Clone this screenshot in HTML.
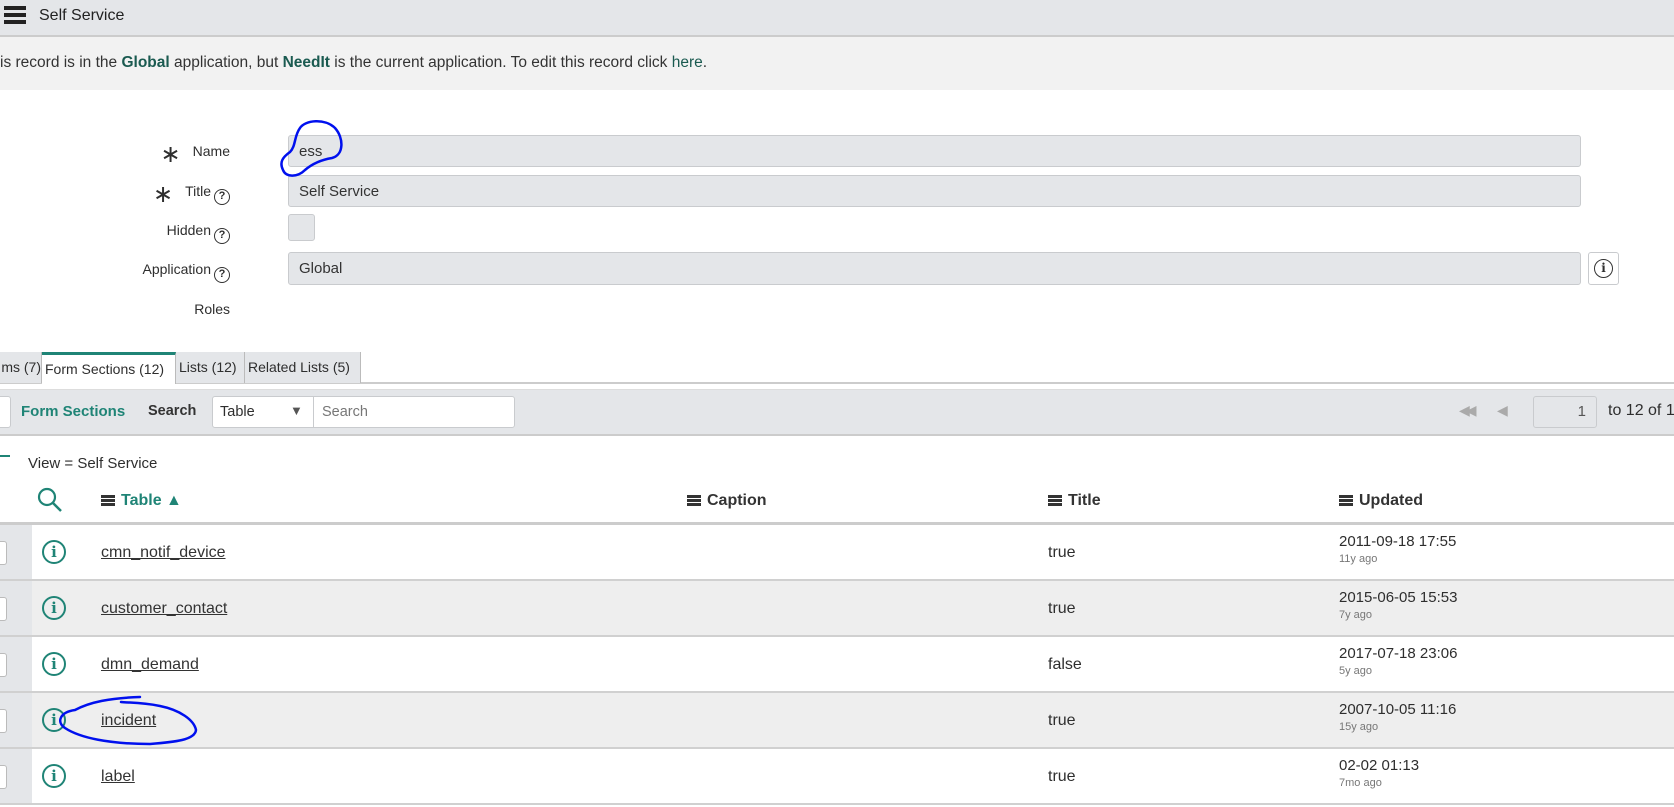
<!DOCTYPE html>
<html><head><meta charset="utf-8"><style>
*{box-sizing:border-box;margin:0;padding:0}
body{width:1674px;height:807px;overflow:hidden;background:#fff;font-family:"Liberation Sans",sans-serif;color:#2e2e2e;position:relative;font-size:15px}
.a{position:absolute;white-space:nowrap}
.field{position:absolute;background:#e4e6e9;border:1px solid #c9cbce;border-radius:3px;font-size:15px;color:#333;padding:0 0 0 10px;line-height:31px}
.lbl{position:absolute;right:1444px;font-size:14px;text-align:right;white-space:nowrap;line-height:20px}
.q{display:inline-block;width:16px;height:16px;border:1.5px solid #333;border-radius:50%;font-size:11px;line-height:13px;text-align:center;font-weight:bold;vertical-align:-3px;margin-left:3px}
.star{font-size:24px;line-height:0;vertical-align:-6px;margin-right:12px}
.tab{position:absolute;top:352px;height:31px;background:#e4e6e9;border-right:1px solid #bbb;font-size:14px;line-height:30px;padding:0 3px;white-space:nowrap;overflow:hidden}
.ham{display:inline-block;width:14px;height:11px;border-top:3px solid #333;border-bottom:3px solid #333;position:relative;vertical-align:-1px;margin-right:6px}
.ham:after{content:"";position:absolute;left:0;right:0;top:1px;height:3px;background:#333}
.row{position:absolute;left:0;width:1674px;height:56px;border-bottom:2px solid #d0d0d0}
.row .chk{position:absolute;left:0;top:0;width:32px;height:54px;background:#e4e6e9}
.row .chk i{position:absolute;left:-10px;top:16px;width:17px;height:24px;background:#fff;border:1px solid #bbb;border-radius:3px}
.row .inf{position:absolute;left:42px;top:15px;width:24px;height:24px;border:2px solid #1f8476;border-radius:50%;color:#1f8476;font-size:15px;font-weight:bold;text-align:center;line-height:20px;font-family:"DejaVu Serif",serif}
.row .t{position:absolute;left:101px;top:19px;text-decoration:underline;font-size:16px;color:#333}
.row .b{position:absolute;left:1048px;top:19px;font-size:16px}
.row .d{position:absolute;left:1339px;top:8px;font-size:15px}
.row .g{position:absolute;left:1339px;top:28px;font-size:11px;color:#777}
</style></head><body>
<div class="a" style="left:0;top:0;width:1674px;height:37px;background:#e4e6e9;border-bottom:2px solid #ccc"></div>
<div class="a" style="left:4px;top:6px;width:22px;height:18px;border-top:4px solid #222;border-bottom:4px solid #222"><div style="margin-top:3px;height:4px;background:#222"></div></div>
<div class="a" style="left:39px;top:7px;font-size:16px;color:#222">Self Service</div>
<div class="a" style="left:0;top:37px;width:1674px;height:53px;background:#f2f2f2"></div>
<div class="a" style="left:0;top:54px;font-size:15.5px;color:#333">is record is in the <b style="color:#1a5a50">Global</b> application, but <b style="color:#1a5a50">NeedIt</b> is the current application. To edit this record click <span style="color:#1a5a50">here</span>.</div>

<div class="lbl" style="top:141px"><span class="star">∗</span>Name</div>
<div class="lbl" style="top:181px"><span class="star">∗</span>Title<span class="q">?</span></div>
<div class="lbl" style="top:220px">Hidden<span class="q">?</span></div>
<div class="lbl" style="top:259px">Application<span class="q">?</span></div>
<div class="lbl" style="top:299px">Roles</div>
<div class="field" style="left:288px;top:135px;width:1293px;height:32px">ess</div>
<div class="field" style="left:288px;top:175px;width:1293px;height:32px">Self Service</div>
<div class="field" style="left:288px;top:214px;width:27px;height:27px"></div>
<div class="field" style="left:288px;top:252px;width:1293px;height:33px">Global</div>
<div class="a" style="left:1588px;top:252px;width:31px;height:33px;border:1px solid #c9cbce;border-radius:3px;background:#fff"><div style="margin:6px auto;width:19px;height:19px;border:1.5px solid #333;border-radius:50%;text-align:center;font-size:12px;line-height:16px;font-weight:bold;font-family:'DejaVu Serif',serif">i</div></div>

<div class="a" style="left:0;top:382px;width:1674px;height:2px;background:#ccc"></div>
<div class="tab" style="left:0;width:42px;padding:0;text-align:right">ms (7)</div>
<div class="tab" style="left:42px;width:134px;background:#fff;border-top:3px solid #1f8476;height:32px;line-height:28px">Form Sections (12)</div>
<div class="tab" style="left:176px;width:69px">Lists (12)</div>
<div class="tab" style="left:245px;width:116px">Related Lists (5)</div>

<div class="a" style="left:0;top:389px;width:1674px;height:47px;background:#e4e6e9;border-bottom:2px solid #ccc;border-top:1px solid #ddd"></div>
<div class="a" style="left:-20px;top:396px;width:31px;height:32px;background:#fff;border:1px solid #c9cbce;border-radius:3px"></div>
<div class="a" style="left:21px;top:403px;font-size:15px;font-weight:bold;color:#1f8476">Form Sections</div>
<div class="a" style="left:148px;top:403px;font-size:14.5px;font-weight:bold;color:#333">Search</div>
<div class="a" style="left:212px;top:396px;width:303px;height:32px;background:#fff;border:1px solid #c9cbce;border-radius:3px"></div>
<div class="a" style="left:313px;top:396px;width:1px;height:32px;background:#c9cbce"></div>
<div class="a" style="left:220px;top:404px;font-size:14.5px">Table</div>
<div class="a" style="left:290px;top:403px;font-size:13px;color:#555">▼</div>
<div class="a" style="left:322px;top:404px;font-size:14.5px;color:#777">Search</div>
<div class="a" style="left:1459px;top:402px;font-size:14px;color:#aaa;letter-spacing:-4px">◀◀</div>
<div class="a" style="left:1497px;top:402px;font-size:14px;color:#aaa">◀</div>
<div class="a" style="left:1533px;top:396px;width:64px;height:32px;background:#e4e6e9;border:1px solid #c9cbce;border-radius:3px;text-align:right;padding-right:10px;line-height:30px;color:#555">1</div>
<div class="a" style="left:1608px;top:402px;font-size:16px">to 12 of 1</div>

<div class="a" style="left:-6px;top:455px;width:16px;height:14px;border-top:2px solid #1f8476"></div>
<div class="a" style="left:28px;top:455px;font-size:15px">View = Self Service</div>
<svg class="a" style="left:36px;top:486px" width="28" height="28" viewBox="0 0 28 28"><circle cx="11" cy="11" r="8" fill="none" stroke="#1f8476" stroke-width="2.2"/><path d="M17 17 L25 25" stroke="#1f8476" stroke-width="2.5"/></svg>
<div class="a" style="left:-4px;top:492px;color:#1f8476;font-weight:bold">:</div>
<div class="a" style="left:101px;top:492px;font-size:16px;font-weight:bold;color:#1f8476"><span class="ham"></span>Table ▲</div>
<div class="a" style="left:687px;top:492px;font-size:16px;font-weight:bold;color:#333"><span class="ham"></span>Caption</div>
<div class="a" style="left:1048px;top:492px;font-size:16px;font-weight:bold;color:#333"><span class="ham"></span>Title</div>
<div class="a" style="left:1339px;top:492px;font-size:16px;font-weight:bold;color:#333"><span class="ham"></span>Updated</div>
<div class="a" style="left:0;top:522px;width:1674px;height:3px;background:#ccc"></div>

<div class="row" style="top:525px;background:#fff"><div class="chk"><i></i></div><div class="inf">i</div><div class="t">cmn_notif_device</div><div class="b">true</div><div class="d">2011-09-18 17:55</div><div class="g">11y ago</div></div>
<div class="row" style="top:581px;background:#eee"><div class="chk"><i></i></div><div class="inf">i</div><div class="t">customer_contact</div><div class="b">true</div><div class="d">2015-06-05 15:53</div><div class="g">7y ago</div></div>
<div class="row" style="top:637px;background:#fff"><div class="chk"><i></i></div><div class="inf">i</div><div class="t">dmn_demand</div><div class="b">false</div><div class="d">2017-07-18 23:06</div><div class="g">5y ago</div></div>
<div class="row" style="top:693px;background:#eee"><div class="chk"><i></i></div><div class="inf">i</div><div class="t">incident</div><div class="b">true</div><div class="d">2007-10-05 11:16</div><div class="g">15y ago</div></div>
<div class="row" style="top:749px;background:#fff"><div class="chk"><i></i></div><div class="inf">i</div><div class="t">label</div><div class="b">true</div><div class="d">02-02 01:13</div><div class="g">7mo ago</div></div>

<svg class="a" style="left:0;top:0" width="1674" height="807"><g fill="none" stroke="#0010ee" stroke-width="2.5" stroke-linecap="round">
<path d="M300 128 C305 120 325 118 335 128 C344 138 344 155 332 158 C320 160 312 164 305 170 C298 177 286 178 283 170 C279 162 283 157 290 152 C296 146 294 136 300 128"/>
<path d="M140 697 C110 698 90 702 75 710 C60 712 56 722 65 728 C80 738 110 744 150 744 C175 742 195 740 196 730 C194 720 180 710 160 706 C140 702 130 703 121 702"/>
</g></svg>
</body></html>
